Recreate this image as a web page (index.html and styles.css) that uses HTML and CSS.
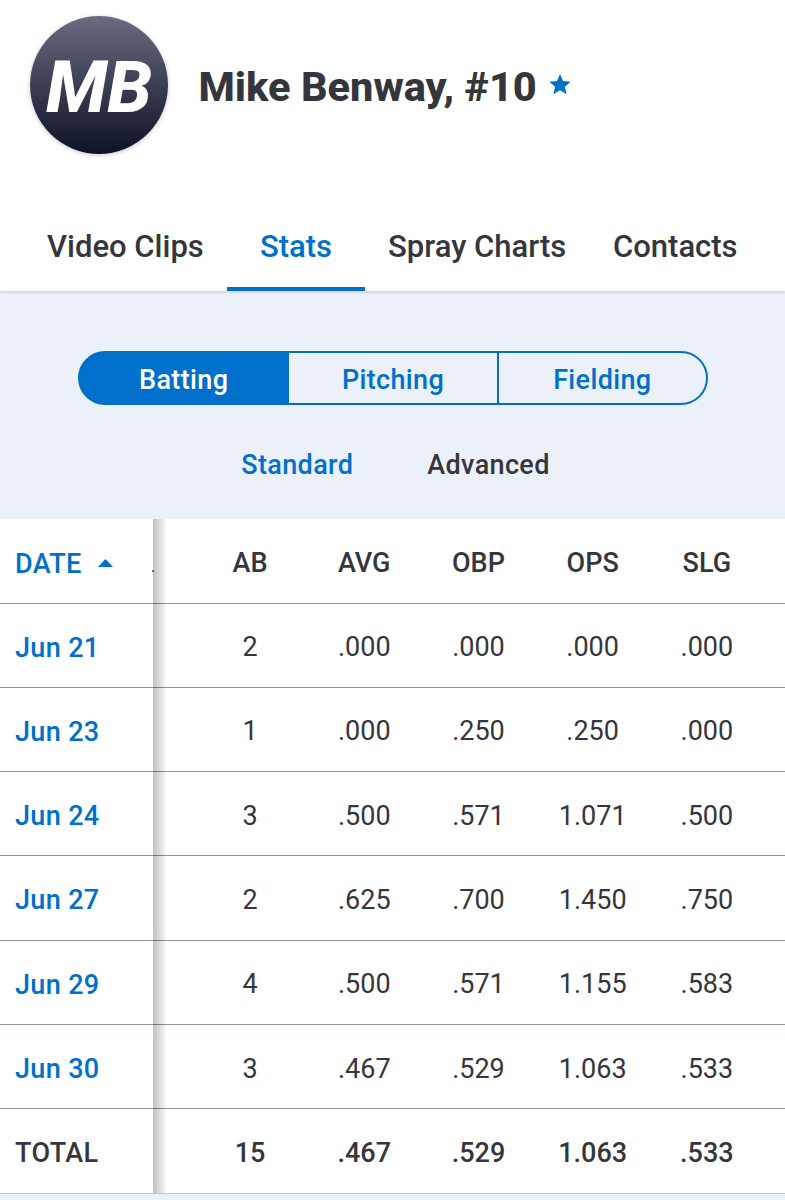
FILE: index.html
```html
<!doctype html>
<html lang="en">
  <head>
    <meta charset="UTF-8" />
    <meta name="viewport" content="width=device-width, initial-scale=1.0" />
    <title>Mike Benway, #10 - Stats</title>
    <link rel="stylesheet" href="styles.css">
  </head>
  <body>
    <header class="player-header">
      <div class="avatar"><span>MB</span></div>
      <h1 class="player-name">Mike Benway, #10</h1>
      <svg class="star" viewBox="0 0 22 21" width="22" height="21">
        <path d="M11 0l3 7 7.7.7-5.8 5 1.8 7.5L11 16.3l-6.7 3.9 1.8-7.5-5.8-5L8 7z" fill="#0070cc" />
      </svg>
    </header>

    <nav class="tabs">
      <a class="tab">Video Clips</a>
      <a class="tab active">Stats</a>
      <a class="tab">Spray Charts</a>
      <a class="tab">Contacts</a>
    </nav>

    <section class="filters">
      <div class="segmented">
        <div class="segment active">Batting</div>
        <div class="segment">Pitching</div>
        <div class="segment">Fielding</div>
      </div>
      <div class="modes">
        <span class="mode active">Standard</span>
        <span class="mode">Advanced</span>
      </div>
    </section>

    <main class="stats">
      <div class="row head">
        <div class="date">DATE
          <svg class="sort" viewBox="0 0 15 8" width="15" height="8"><path d="M7.5 0L15 8H0z" fill="#0070cc" /></svg>
        </div>
        <div>AB</div><div>AVG</div><div>OBP</div><div>OPS</div><div>SLG</div>
      </div>
      <div class="row">
        <div class="date">Jun 21</div>
        <div>2</div><div>.000</div><div>.000</div><div>.000</div><div>.000</div>
      </div>
      <div class="row">
        <div class="date">Jun 23</div>
        <div>1</div><div>.000</div><div>.250</div><div>.250</div><div>.000</div>
      </div>
      <div class="row">
        <div class="date">Jun 24</div>
        <div>3</div><div>.500</div><div>.571</div><div>1.071</div><div>.500</div>
      </div>
      <div class="row">
        <div class="date">Jun 27</div>
        <div>2</div><div>.625</div><div>.700</div><div>1.450</div><div>.750</div>
      </div>
      <div class="row">
        <div class="date">Jun 29</div>
        <div>4</div><div>.500</div><div>.571</div><div>1.155</div><div>.583</div>
      </div>
      <div class="row">
        <div class="date">Jun 30</div>
        <div>3</div><div>.467</div><div>.529</div><div>1.063</div><div>.533</div>
      </div>
      <div class="row total">
        <div class="date">TOTAL</div>
        <div>15</div><div>.467</div><div>.529</div><div>1.063</div><div>.533</div>
      </div>
    </main>
  </body>
</html>
```
FILE: styles.css
```css
* {
  margin: 0;
  padding: 0;
  box-sizing: border-box;
}

body {
  font-family: Roboto, sans-serif;
  background: #ebf0f9;
  color: #35363c;
  height: 1200px;
  overflow: hidden;
}

/* Header */
.player-header {
  display: flex;
  align-items: center;
  height: 203px;
  padding: 0 0 34px 30px;
  background: #fff;
}

.avatar {
  display: flex;
  align-items: center;
  justify-content: center;
  width: 138px;
  height: 138px;
  padding-top: 5px;
  border-radius: 50%;
  background: linear-gradient(#6a6b80, #0e1227);
  box-shadow: 0 1px 4px rgba(20, 24, 60, 0.25);
  color: #fff;
  font-size: 72px;
  font-weight: 800;
  font-style: italic;
}

.player-name {
  margin-left: 30.5px;
  padding-top: 4px;
  font-size: 41.5px;
  font-weight: 800;
  white-space: nowrap;
}

.star {
  margin-left: 12px;
}

/* Tabs */
.tabs {
  display: flex;
  height: 88px;
  padding-left: 23.7px;
  background: #fff;
  box-shadow: 0 2px 2px rgba(0, 0, 0, 0.1);
  position: relative;
}

.tab {
  display: flex;
  justify-content: center;
  min-width: 137.5px;
  padding: 25px 23.4px 0;
  border-bottom: 4px solid transparent;
  font-size: 31px;
  line-height: 37px;
  font-weight: 500;
  white-space: nowrap;
}

.tab.active {
  color: #0070cc;
  border-color: #0070cc;
}

/* Filters */
.filters {
  height: 228px;
  padding: 60px 77px 0 78px;
  font-size: 27px;
  letter-spacing: 0.35px;
  font-weight: 500;
}

.segmented {
  display: flex;
  height: 54px;
  border: 2px solid #0070bf;
  border-radius: 27px;
  overflow: hidden;
  background: linear-gradient(90deg, #0070cc 50px, transparent 50px) border-box;
  color: #0070cc;
}

.segment {
  flex: 1;
  display: flex;
  align-items: center;
  justify-content: center;
  padding-top: 4px;
}

.segment + .segment {
  border-left: 2px solid #0070bf;
}

.segment.active {
  background: #0070cc;
  color: #fff;
}

.modes {
  display: flex;
  justify-content: center;
  gap: 74px;
  margin-top: 44px;
  padding-left: 5px;
  line-height: 32px;
}

.mode.active {
  color: #0070cc;
}

/* Stats table */
.stats {
  position: relative;
  background: #fff;
}

/* shadow cast by the pinned date column */
.stats::after {
  content: '';
  position: absolute;
  top: 0;
  bottom: 1px;
  left: 153px;
  width: 14px;
  background: linear-gradient(90deg, rgba(0, 0, 0, 0.25), rgba(0, 0, 0, 0.13) 50%, transparent);
}

.row {
  display: grid;
  grid-template-columns: 193px repeat(5, 114.2px);
  align-items: center;
  height: 84.3px;
  padding-top: 3.6px;
  border-bottom: 1px solid #8e95a3;
  font-size: 27px;
  text-align: center;
}

.row .date {
  display: flex;
  align-items: center;
  padding: 1px 0 0 15px;
  letter-spacing: 0.35px;
  font-weight: 500;
  color: #0070cc;
}

.sort {
  margin: 0 0 2px 16px;
}

.head,
.total {
  font-weight: 500;
}

.head {
  position: relative;
  height: 84.6px;
  padding-top: 5px;
}

/* edge of the column scrolled under the date column */
.head::after {
  content: '';
  position: absolute;
  left: 152px;
  top: 51px;
  width: 2px;
  height: 2px;
  background: #777;
}

.total {
  border-color: #c3c7ce;
}

.row.total .date {
  color: #35363c;
}
```
